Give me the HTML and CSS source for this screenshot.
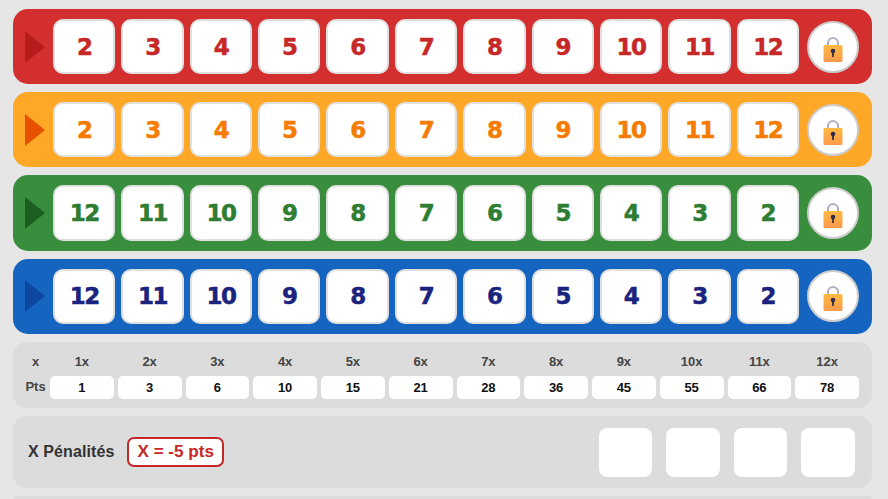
FILE: index.html
```html
<!DOCTYPE html>
<html lang="fr">
<head>
    <meta charset="utf-8">
    <title>Qwixx</title>
    <link rel="stylesheet" href="styles.css">
</head>
<body>
    <svg class="defs" width="0" height="0" aria-hidden="true">
        <defs>
            <linearGradient id="lockBody" x1="0" y1="0" x2="0" y2="1">
                <stop offset="0" stop-color="#fdb93f"/>
                <stop offset="1" stop-color="#fd9a4e"/>
            </linearGradient>
            <symbol id="lock" viewBox="0 0 20 25">
                <path d="M5 9V6a5 5 0 0 1 10 0V9" fill="none" stroke="#b4adc4" stroke-width="2"/>
                <rect x="0.500" y="8" width="19" height="17" rx="1.500" fill="url(#lockBody)"/>
                <circle cx="10" cy="14" r="2.300" fill="#2f2b4a"/>
                <path d="M9 15h2l-.2 5h-1.600z" fill="#2f2b4a"/>
            </symbol>
        </defs>
    </svg>

    <div class="row row-red">
        <span class="arrow"></span>
        <div class="cell">2</div><div class="cell">3</div><div class="cell">4</div><div class="cell">5</div>
        <div class="cell">6</div><div class="cell">7</div><div class="cell">8</div><div class="cell">9</div>
        <div class="cell">10</div><div class="cell">11</div><div class="cell">12</div>
        <div class="lock"><svg width="20" height="25"><use href="#lock"/></svg></div>
    </div>

    <div class="row row-orange">
        <span class="arrow"></span>
        <div class="cell">2</div><div class="cell">3</div><div class="cell">4</div><div class="cell">5</div>
        <div class="cell">6</div><div class="cell">7</div><div class="cell">8</div><div class="cell">9</div>
        <div class="cell">10</div><div class="cell">11</div><div class="cell">12</div>
        <div class="lock"><svg width="20" height="25"><use href="#lock"/></svg></div>
    </div>

    <div class="row row-green">
        <span class="arrow"></span>
        <div class="cell">12</div><div class="cell">11</div><div class="cell">10</div><div class="cell">9</div>
        <div class="cell">8</div><div class="cell">7</div><div class="cell">6</div><div class="cell">5</div>
        <div class="cell">4</div><div class="cell">3</div><div class="cell">2</div>
        <div class="lock"><svg width="20" height="25"><use href="#lock"/></svg></div>
    </div>

    <div class="row row-blue">
        <span class="arrow"></span>
        <div class="cell">12</div><div class="cell">11</div><div class="cell">10</div><div class="cell">9</div>
        <div class="cell">8</div><div class="cell">7</div><div class="cell">6</div><div class="cell">5</div>
        <div class="cell">4</div><div class="cell">3</div><div class="cell">2</div>
        <div class="lock"><svg width="20" height="25"><use href="#lock"/></svg></div>
    </div>

    <div class="panel scores">
        <span class="score-label">x</span>
        <span class="score-label">1x</span><span class="score-label">2x</span><span class="score-label">3x</span>
        <span class="score-label">4x</span><span class="score-label">5x</span><span class="score-label">6x</span>
        <span class="score-label">7x</span><span class="score-label">8x</span><span class="score-label">9x</span>
        <span class="score-label">10x</span><span class="score-label">11x</span><span class="score-label">12x</span>
        <span class="score-label score-pts">Pts</span>
        <span class="score-value">1</span><span class="score-value">3</span><span class="score-value">6</span>
        <span class="score-value">10</span><span class="score-value">15</span><span class="score-value">21</span>
        <span class="score-value">28</span><span class="score-value">36</span><span class="score-value">45</span>
        <span class="score-value">55</span><span class="score-value">66</span><span class="score-value">78</span>
    </div>

    <div class="panel penalties">
        <span class="penalty-title">X Pénalités</span>
        <span class="penalty-badge">X = -5 pts</span>
        <div class="penalty-boxes">
            <div class="penalty-box"></div>
            <div class="penalty-box"></div>
            <div class="penalty-box"></div>
            <div class="penalty-box"></div>
        </div>
    </div>

    <div class="panel panel-cut"></div>
</body>
</html>
```

FILE: styles.css
```css
html, body {
    height: 499px;
    overflow: hidden;
}
body {
    margin: 0;
    padding: 9px 16px 0 13px;
    background-color: #e6e6e6;
    font-family: "Liberation Sans", Arial, sans-serif;
    display: flex;
    flex-direction: column;
    gap: 8px;
    box-sizing: border-box;
}
.defs {
    position: absolute;
}
.row {
    display: flex;
    align-items: center;
    flex: none;
    gap: 6px;
    height: 75.2px;
    padding: 0 13px 0 12px;
    border-radius: 15px;
    box-sizing: border-box;
}
.row-red { background-color: #d32f2f; color: #c62828; }
.row-orange { background-color: #ffa726; color: #f57c00; }
.row-green { background-color: #388e3c; color: #2e7d32; }
.row-blue { background-color: #1565c0; color: #1a237e; }

.arrow {
    flex: none;
    width: 0;
    height: 0;
    margin-right: 2px;
    border-style: solid;
    border-width: 16px 0 16px 20px;
    border-color: transparent;
}
.row-red .arrow { border-left-color: #b71c1c; }
.row-orange .arrow { border-left-color: #e65100; }
.row-green .arrow { border-left-color: #1b5e20; }
.row-blue .arrow { border-left-color: #0d47a1; }

.cell {
    flex: 1 1 0;
    height: 55.2px;
    display: flex;
    align-items: center;
    justify-content: center;
    background-color: #fff;
    border: 2px solid #e0e0e0;
    border-radius: 10px;
    box-sizing: border-box;
    font-family: "DejaVu Sans", Verdana, sans-serif;
    font-size: 23px;
    font-weight: bold;
    letter-spacing: -1.5px;
    -webkit-text-stroke: 0.5px currentColor;
}
.lock {
    flex: none;
    width: 52px;
    height: 52px;
    margin-left: 2px;
    display: flex;
    align-items: center;
    justify-content: center;
    background-color: #fff;
    border: 2px solid #ccc;
    border-radius: 50%;
    box-sizing: border-box;
}
.lock svg {
    display: block;
    margin-top: 5px;
}

.panel {
    flex: none;
    background-color: #dcdcdc;
    border-radius: 14px;
}
.scores {
    display: grid;
    grid-template-columns: 21px repeat(12, 1fr);
    grid-template-rows: 23px 23px;
    column-gap: 4px;
    row-gap: 3px;
    height: 66.5px;
    padding: 8px 13px 0 12px;
    box-sizing: border-box;
    align-items: center;
    text-align: center;
}
.score-label {
    font-size: 13px;
    font-weight: bold;
    color: #444;
    white-space: nowrap;
}
.score-pts {
    margin-bottom: 1px;
}
.score-value {
    height: 23px;
    line-height: 24px;
    background-color: #fff;
    border-radius: 5px;
    font-size: 13px;
    font-weight: bold;
    color: #111;
}
.penalties {
    display: flex;
    align-items: center;
    height: 72px;
    padding: 0 17.2px 0 15px;
    box-sizing: border-box;
}
.penalty-title {
    font-size: 16px;
    font-weight: bold;
    letter-spacing: 0.1px;
    color: #333;
}
.penalty-badge {
    margin-left: 13px;
    padding: 3px 8px;
    background-color: #fff;
    border: 2px solid #c62828;
    border-radius: 7px;
    font-size: 17.1px;
    font-weight: bold;
    color: #c62828;
}
.penalty-boxes {
    display: flex;
    gap: 13.75px;
    margin-left: auto;
}
.penalty-box {
    width: 53.75px;
    height: 49px;
    background-color: #fff;
    border-radius: 8px;
}
.panel-cut {
    flex: 1;
    border-radius: 14px 14px 0 0;
}
```
